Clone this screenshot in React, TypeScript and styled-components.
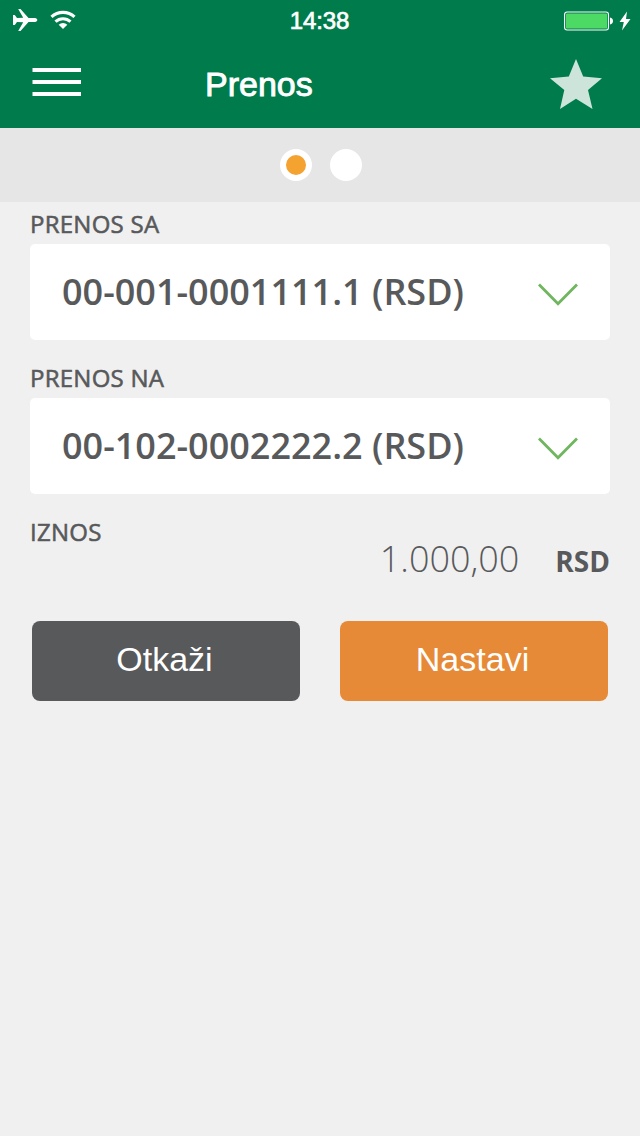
import React from "react";
import styled, { createGlobalStyle } from "styled-components";

const GlobalStyle = createGlobalStyle`
  *, *::before, *::after { box-sizing: border-box; }
  body { margin: 0; background: #f0f0f0; }
  button { font: inherit; border: 0; padding: 0; background: none; }
  svg { display: block; }
`;

const Screen = styled.div`
  width: 640px;
  min-height: 1136px;
  background: #f0f0f0;
  color: #58595b;
  font-family: "Open Sans", sans-serif;
`;

const Header = styled.header`
  height: 128px;
  background: #007b4b;
  color: #fff;
  font-family: "Liberation Sans", Arial, sans-serif;
`;

const StatusBar = styled.div`
  height: 40px;
  display: grid;
  grid-template-columns: 1fr auto 1fr;
  align-items: center;
  padding: 0 9px 0 12px;
`;

const StatusGroup = styled.div<{ $end?: boolean }>`
  display: flex;
  align-items: center;
  gap: ${(p) => (p.$end ? "5px" : "12px")};
  padding-top: ${(p) => (p.$end ? "1px" : "0")};
  justify-content: ${(p) => (p.$end ? "flex-end" : "flex-start")};
`;

const Clock = styled.span`
  font-size: 24px;
  line-height: 28px;
  letter-spacing: -0.1px;
  padding: 2px 4px 0 0;
  -webkit-text-stroke: 0.7px #fff;
`;

const NavBar = styled.div`
  height: 88px;
  display: flex;
  align-items: center;
  padding: 0 38px 0 32px;
`;

const Title = styled.h1`
  margin: 0 auto 0 124px;
  font-size: 34px;
  line-height: 40px;
  font-weight: 400;
  -webkit-text-stroke: 0.9px #fff;
`;

const IconButton = styled.button<{ $lift?: number }>`
  display: block;
  margin-bottom: ${(p) => p.$lift ?? 0}px;
`;

const Pager = styled.div`
  height: 74px;
  background: #e6e6e6;
  display: flex;
  align-items: center;
  justify-content: center;
  gap: 18px;
  padding-left: 2px;
`;

const Dot = styled.span<{ $active?: boolean }>`
  width: 32px;
  height: 32px;
  border-radius: 50%;
  border: 6px solid #fff;
  background: ${(p) => (p.$active ? "#f4a230" : "#fff")};
`;

const Form = styled.main`
  padding: 2px 30px 0;
`;

const Field = styled.div`
  margin-bottom: 18px;
`;

const Label = styled.div`
  height: 40px;
  font-size: 24px;
  line-height: 40px;
  letter-spacing: 0.26px;
  -webkit-text-stroke: 0.55px #58595b;
`;

const Select = styled.button`
  width: 100%;
  height: 96px;
  display: flex;
  align-items: center;
  justify-content: space-between;
  padding: 3px 32px 0;
  border-radius: 5px;
  background: #fff;
  color: inherit;
`;

const Account = styled.span`
  font-size: 36px;
  line-height: 50px;
  font-weight: 600;
  padding-bottom: 3px;
`;

const AmountField = styled.div`
  display: flex;
  align-items: flex-start;
  height: 109px;
`;

const Amount = styled.div`
  margin: 22px 0 0 auto;
  display: flex;
  align-items: baseline;
  gap: 36px;
  line-height: 50px;
`;

const Value = styled.span`
  font-size: 36px;
  font-weight: 300;
`;

const Currency = styled.span`
  font-size: 28px;
  font-weight: 700;
`;

const Actions = styled.div`
  display: grid;
  grid-template-columns: 1fr 1fr;
  gap: 40px;
  padding: 0 2px;
`;

const ActionButton = styled.button<{ $primary?: boolean }>`
  && {
    height: 80px;
    padding: 0 3px 4px 0;
    border-radius: 8px;
    background: ${(p) => (p.$primary ? "#e68a37" : "#58595b")};
    color: #fff;
    font-family: "Liberation Sans", Arial, sans-serif;
    font-size: 34px;
    line-height: 40px;
  }
`;

const Airplane = () => (
  <svg width="26" height="24" viewBox="0 0 26 24" fill="#fff">
    <path d="M1 7h1.800L5 9.900l6.200-.1L6.200 1h2.300l8 8.900 6.500.1c1.400.1 2.300 1 2.300 2s-.9 1.900-2.300 2l-6.500.1-8 8.900H6.200l5-8.800-6.200-.1L2.800 17H1z" />
  </svg>
);

const Wifi = () => (
  <svg width="26" height="20" viewBox="0 0 26 20" fill="none" stroke="#fff">
    <path d="M1.500 6.900a17 17 0 0 1 23 0" strokeWidth="3.200" />
    <path d="M5.500 11.600a11 11 0 0 1 15 0" strokeWidth="3" />
    <path d="M13 19l-4.300-4.300a6.300 6.300 0 0 1 8.600 0z" fill="#fff" stroke="none" />
  </svg>
);

const Battery = () => (
  <svg width="50" height="20" viewBox="0 0 50 20">
    <rect x="0.600" y="1" width="43.900" height="18" rx="2.500" fill="none" stroke="#fff" strokeWidth="1.100" />
    <rect x="2" y="2.400" width="41.200" height="15.200" rx="1.200" fill="#4cd964" />
    <path d="M46 6.500c4 .8 4 6.200 0 7z" fill="#fff" />
  </svg>
);

const Bolt = () => (
  <svg width="12" height="20" viewBox="0 0 12 20" fill="#fff">
    <path d="M8 .5L.5 11h4.300L3 19.500 11.500 8H7z" />
  </svg>
);

const Menu = () => (
  <svg width="49" height="28" viewBox="0 0 49 28" fill="#fff">
    <path d="M.5 0H49v4H.5zM.5 12H49v4H.5zM.5 24H49v4H.5z" />
  </svg>
);

const Star = () => (
  <svg width="52" height="50" viewBox="0 0 52 50" fill="#cde4da">
    <path d="M26 0l7.200 17.500L52 19.300 38 31l4.500 19L26 39.800 10 50l4.300-19L0 19.300 18.800 17.500z" />
  </svg>
);

const Chevron = () => (
  <svg width="40" height="24" viewBox="0 0 40 24" fill="none" stroke="#6fb65f" strokeWidth="2.800">
    <path d="M1 2.500l19 19.200L39 2.500" />
  </svg>
);

const accounts = [
  { label: "PRENOS SA", number: "00-001-0001111.1 (RSD)" },
  { label: "PRENOS NA", number: "00-102-0002222.2 (RSD)" },
];

export default function App() {
  return (
    <Screen>
      <GlobalStyle />
      <Header>
        <StatusBar>
          <StatusGroup>
            <Airplane />
            <Wifi />
          </StatusGroup>
          <Clock>14:38</Clock>
          <StatusGroup $end>
            <Battery />
            <Bolt />
          </StatusGroup>
        </StatusBar>
        <NavBar>
          <IconButton $lift={4} aria-label="Meni"><Menu /></IconButton>
          <Title>Prenos</Title>
          <IconButton aria-label="Omiljeno"><Star /></IconButton>
        </NavBar>
      </Header>
      <Pager>
        <Dot $active />
        <Dot />
      </Pager>
      <Form>
        {accounts.map((a) => (
          <Field key={a.label}>
            <Label>{a.label}</Label>
            <Select>
              <Account>{a.number}</Account>
              <Chevron />
            </Select>
          </Field>
        ))}
        <AmountField>
          <Label>IZNOS</Label>
          <Amount>
            <Value>1.000,00</Value>
            <Currency>RSD</Currency>
          </Amount>
        </AmountField>
        <Actions>
          <ActionButton>Otkaži</ActionButton>
          <ActionButton $primary>Nastavi</ActionButton>
        </Actions>
      </Form>
    </Screen>
  );
}
